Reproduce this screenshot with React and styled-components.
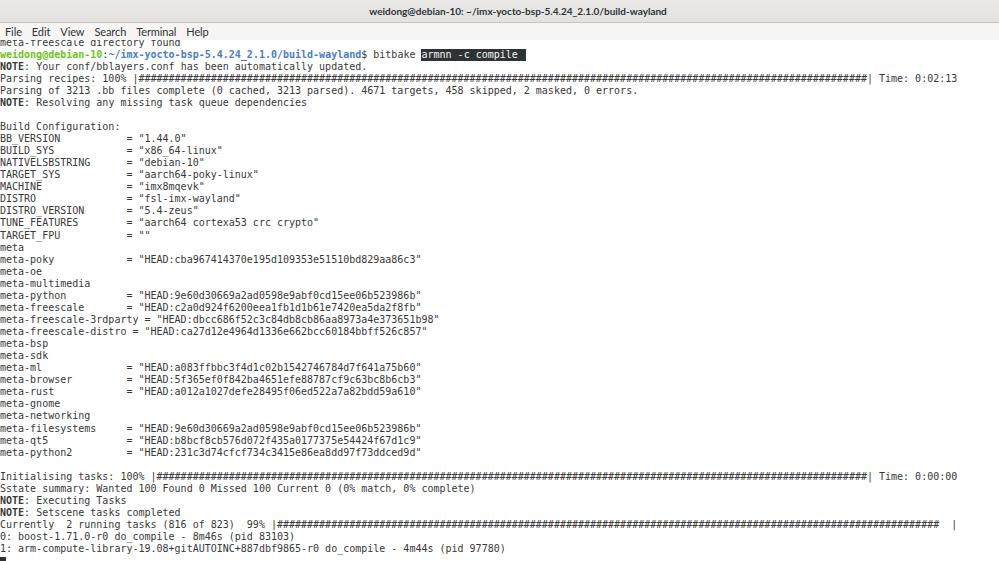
import React from 'react';
import styled, { createGlobalStyle } from 'styled-components';

const GlobalStyle = createGlobalStyle`
  html, body {
    margin: 0;
    padding: 0;
    background: #ffffff;
  }
  body {
    font-family: "DejaVu Sans Mono", monospace;
  }
`

const Window = styled.div`
  width: 999px;
  height: 561px;
  display: flex;
  flex-direction: column;
  overflow: hidden;
  background: #ffffff;
`

const TitleBar = styled.div`
  height: 22px;
  flex: none;
  display: flex;
  align-items: center;
  justify-content: center;
  padding-left: 37px;
  background: linear-gradient(#e9e8e6, #e3e2e0);
  border-bottom: 1px solid #c8c4bf;
`

const Title = styled.div`
  font-family: Lato, "Noto Sans", sans-serif;
  font-weight: 700;
  font-size: 10px;
  line-height: 12px;
  color: #2e3436;
  white-space: nowrap;
`

const MenuBar = styled.div`
  height: 17px;
  flex: none;
  display: flex;
  align-items: center;
  background: #f6f5f4;
  overflow: hidden;
`

const MenuItem = styled.div`
  padding: 0 5px;
  font-family: Lato, "Noto Sans", sans-serif;
  font-size: 11px;
  line-height: 13px;
  letter-spacing: -0.1px;
  color: #2e3436;
`

const Screen = styled.div`
  flex: 1;
  overflow: hidden;
  background: #ffffff;
`

const Scrollback = styled.div`
  margin-top: -3.5px;
  font-family: "DejaVu Sans Mono", monospace;
  font-size: 10px;
  color: #383838;
`

const Line = styled.div`
  height: 12.07px;
  line-height: 12.07px;
  white-space: pre;
`

const Seg = styled.span`
  font-weight: ${p => (p.$bold ? 700 : 400)};
  color: ${p => p.$color || 'inherit'};
`

const Selection = styled.span`
  background: #2e3436;
  color: #f4f4f4;
  padding-right: 2px;
  box-shadow: 0 1px 0 #2e3436;
`

const Cursor = styled.span`
  display: inline-block;
  width: 6px;
  height: 12px;
  background: #2e3436;
  vertical-align: top;
  margin-top: 2px;
`

const GREEN = '#6cc424'
const BLUE = '#4b7dc4'

const hashes = n => '#'.repeat(n)
const cfg = (k, v) => `${k.padEnd(20)} = "${v}"`

const plain = t => [{ t }]
const note = t => [{ t: 'NOTE', b: true }, { t }]

const lines = [
  plain('meta-freescale directory found'),
  'prompt',
  note(': Your conf/bblayers.conf has been automatically updated.'),
  plain('Parsing recipes: 100% |' + hashes(121) + '| Time: 0:02:13'),
  plain('Parsing of 3213 .bb files complete (0 cached, 3213 parsed). 4671 targets, 458 skipped, 2 masked, 0 errors.'),
  note(': Resolving any missing task queue dependencies'),
  plain(''),
  plain('Build Configuration:'),
  plain(cfg('BB_VERSION', '1.44.0')),
  plain(cfg('BUILD_SYS', 'x86_64-linux')),
  plain(cfg('NATIVELSBSTRING', 'debian-10')),
  plain(cfg('TARGET_SYS', 'aarch64-poky-linux')),
  plain(cfg('MACHINE', 'imx8mqevk')),
  plain(cfg('DISTRO', 'fsl-imx-wayland')),
  plain(cfg('DISTRO_VERSION', '5.4-zeus')),
  plain(cfg('TUNE_FEATURES', 'aarch64 cortexa53 crc crypto')),
  plain(cfg('TARGET_FPU', '')),
  plain('meta'),
  plain(cfg('meta-poky', 'HEAD:cba967414370e195d109353e51510bd829aa86c3')),
  plain('meta-oe'),
  plain('meta-multimedia'),
  plain(cfg('meta-python', 'HEAD:9e60d30669a2ad0598e9abf0cd15ee06b523986b')),
  plain(cfg('meta-freescale', 'HEAD:c2a0d924f6200eea1fb1d1b61e7420ea5da2f8fb')),
  plain(cfg('meta-freescale-3rdparty', 'HEAD:dbcc686f52c3c84db8cb86aa8973a4e373651b98')),
  plain(cfg('meta-freescale-distro', 'HEAD:ca27d12e4964d1336e662bcc60184bbff526c857')),
  plain('meta-bsp'),
  plain('meta-sdk'),
  plain(cfg('meta-ml', 'HEAD:a083ffbbc3f4d1c02b1542746784d7f641a75b60')),
  plain(cfg('meta-browser', 'HEAD:5f365ef0f842ba4651efe88787cf9c63bc8b6cb3')),
  plain(cfg('meta-rust', 'HEAD:a012a1027defe28495f06ed522a7a82bdd59a610')),
  plain('meta-gnome'),
  plain('meta-networking'),
  plain(cfg('meta-filesystems', 'HEAD:9e60d30669a2ad0598e9abf0cd15ee06b523986b')),
  plain(cfg('meta-qt5', 'HEAD:b8bcf8cb576d072f435a0177375e54424f67d1c9')),
  plain(cfg('meta-python2', 'HEAD:231c3d74cfcf734c3415e86ea8dd97f73ddced9d')),
  plain(''),
  plain('Initialising tasks: 100% |' + hashes(118) + '| Time: 0:00:00'),
  plain('Sstate summary: Wanted 100 Found 0 Missed 100 Current 0 (0% match, 0% complete)'),
  note(': Executing Tasks'),
  note(': Setscene tasks completed'),
  plain('Currently  2 running tasks (816 of 823)  99% |' + hashes(110) + '  |'),
  plain('0: boost-1.71.0-r0 do_compile - 8m46s (pid 83103)'),
  plain('1: arm-compute-library-19.08+gitAUTOINC+887dbf9865-r0 do_compile - 4m44s (pid 97780)'),
  'cursor',
]

const menus = ['File', 'Edit', 'View', 'Search', 'Terminal', 'Help']

function PromptLine() {
  return (
    <Line>
      <Seg $bold $color={GREEN}>weidong@debian-10</Seg>
      <Seg>:</Seg>
      <Seg $bold $color={BLUE}>~/imx-yocto-bsp-5.4.24_2.1.0/build-wayland</Seg>
      <Seg>$ bitbake </Seg>
      <Selection>armnn -c compile </Selection>
    </Line>
  )
}

export default function App() {
  return (
    <>
      <GlobalStyle />
      <Window>
        <TitleBar>
          <Title>weidong@debian-10: ~/imx-yocto-bsp-5.4.24_2.1.0/build-wayland</Title>
        </TitleBar>
        <MenuBar>
          {menus.map(m => <MenuItem key={m}>{m}</MenuItem>)}
        </MenuBar>
        <Screen>
          <Scrollback>
            {lines.map((l, i) => {
              if (l === 'prompt') return <PromptLine key={i} />
              if (l === 'cursor') return <Line key={i}><Cursor /></Line>
              return (
                <Line key={i}>
                  {l.map((s, j) => <Seg key={j} $bold={s.b}>{s.t}</Seg>)}
                </Line>
              )
            })}
          </Scrollback>
        </Screen>
      </Window>
    </>
  )
}
